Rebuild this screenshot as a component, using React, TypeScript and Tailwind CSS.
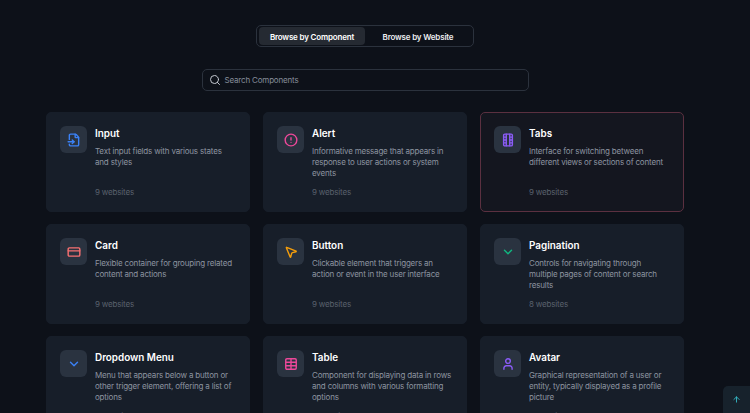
import React from "react";
import { Search, FileInput, CircleAlert, CreditCard, MousePointer2, ChevronDown, Table, User, ArrowUp } from "lucide-react";

type IconProps = { className?: string; strokeWidth?: number };
type Item = { title: string; desc: string; count: string; Icon: React.ComponentType<IconProps>; color: string; active?: boolean };

function FilmStrip({ className, strokeWidth }: IconProps) {
  return (
    <svg viewBox="0 0 24 24" fill="none" stroke="currentColor" strokeWidth={strokeWidth} strokeLinecap="round" strokeLinejoin="round" className={className}>
      <rect x="4.5" y="2" width="15" height="20" rx="2" />
      <path d="M9 2v20M15 2v20" />
      <path d="M4.5 7H9M4.5 12H9M4.5 17H9M15 7h4.5M15 12h4.5M15 17h4.5" />
    </svg>
  );
}

const items: Item[] = [
  { title: "Input", desc: "Text input fields with various states and styles", count: "9 websites", Icon: FileInput, color: "text-[#3b82f6]" },
  { title: "Alert", desc: "Informative message that appears in response to user actions or system events", count: "9 websites", Icon: CircleAlert, color: "text-[#ec4899]" },
  { title: "Tabs", desc: "Interface for switching between different views or sections of content", count: "9 websites", Icon: FilmStrip, color: "text-[#8b5cf6]", active: true },
  { title: "Card", desc: "Flexible container for grouping related content and actions", count: "9 websites", Icon: CreditCard, color: "text-[#f87171]" },
  { title: "Button", desc: "Clickable element that triggers an action or event in the user interface", count: "9 websites", Icon: MousePointer2, color: "text-[#f59e0b]" },
  { title: "Pagination", desc: "Controls for navigating through multiple pages of content or search results", count: "8 websites", Icon: ChevronDown, color: "text-[#10b981]" },
  { title: "Dropdown Menu", desc: "Menu that appears below a button or other trigger element, offering a list of options", count: "9 websites", Icon: ChevronDown, color: "text-[#3b82f6]" },
  { title: "Table", desc: "Component for displaying data in rows and columns with various formatting options", count: "9 websites", Icon: Table, color: "text-[#ec4899]" },
  { title: "Avatar", desc: "Graphical representation of a user or entity, typically displayed as a profile picture", count: "9 websites", Icon: User, color: "text-[#8b5cf6]" },
];

function Card({ item }: { item: Item }) {
  const { Icon } = item;
  return (
    <div className={`flex h-[99.6px] gap-[8px] rounded-[5px] border pt-[13px] pr-[13px] pl-[13px] ${item.active ? "border-[#5b3040] bg-[#14161f]" : "border-[#171e29] bg-[#171e29]"}`}>
      <div className="flex h-[27px] w-[27px] shrink-0 items-center justify-center rounded-[6px] bg-[#2a3340]">
        <Icon className={`h-[14px] w-[14px] ${item.color}`} strokeWidth={2.4} />
      </div>
      <div className="flex min-w-0 flex-1 flex-col">
        <div className="text-[9.9px] leading-[15px] font-semibold text-white">{item.title}</div>
        <div className="mt-[5px] h-[33px] text-[8px] leading-[11px] tracking-[-0.18px] text-[#8d94a0]">{item.desc}</div>
        <div className="mt-[8px] text-[8px] leading-[11px] tracking-[-0.18px] text-[#5a616d]">{item.count}</div>
      </div>
    </div>
  );
}

export default function App() {
  return (
    <div className="relative h-[413px] w-[750px] overflow-hidden bg-[#0d1119] font-['Inter',sans-serif]">
      <div className="flex w-[730px] flex-col items-center pt-[25px]">
        <div className="flex h-[22px] w-[218px] items-center rounded-[5px] border border-[#2b323d] px-[2px]">
          <div className="flex h-[18px] w-[106px] items-center justify-center rounded-[4px] bg-[#252a32] pt-[1px] text-[8px] font-semibold tracking-[-0.18px] text-white">Browse by Component</div>
          <div className="flex h-[18px] flex-1 items-center justify-center pt-[1px] text-[8px] font-semibold tracking-[-0.18px] text-[#eceef1]">Browse by Website</div>
        </div>
        <div className="mt-[22px] flex h-[22px] w-[327px] items-center gap-[4px] rounded-[5px] border border-[#2b323d] px-[6px]">
          <Search className="h-[12px] w-[12px] text-[#c3c8d0]" strokeWidth={2} />
          <span className="text-[8px] tracking-[-0.18px] text-[#868d99]">Search Components</span>
        </div>
        <div className="mt-[21px] grid w-[638px] grid-cols-3 gap-x-[13px] gap-y-[12.6px]">
          {items.map((it) => (
            <Card key={it.title} item={it} />
          ))}
        </div>
      </div>
      <div className="absolute right-0 bottom-0 flex h-[27px] w-[27px] items-center justify-center rounded-tl-[5px] bg-[#17222c]">
        <ArrowUp className="h-[9px] w-[9px] text-[#34b5c4]" strokeWidth={2.5} />
      </div>
    </div>
  );
}
